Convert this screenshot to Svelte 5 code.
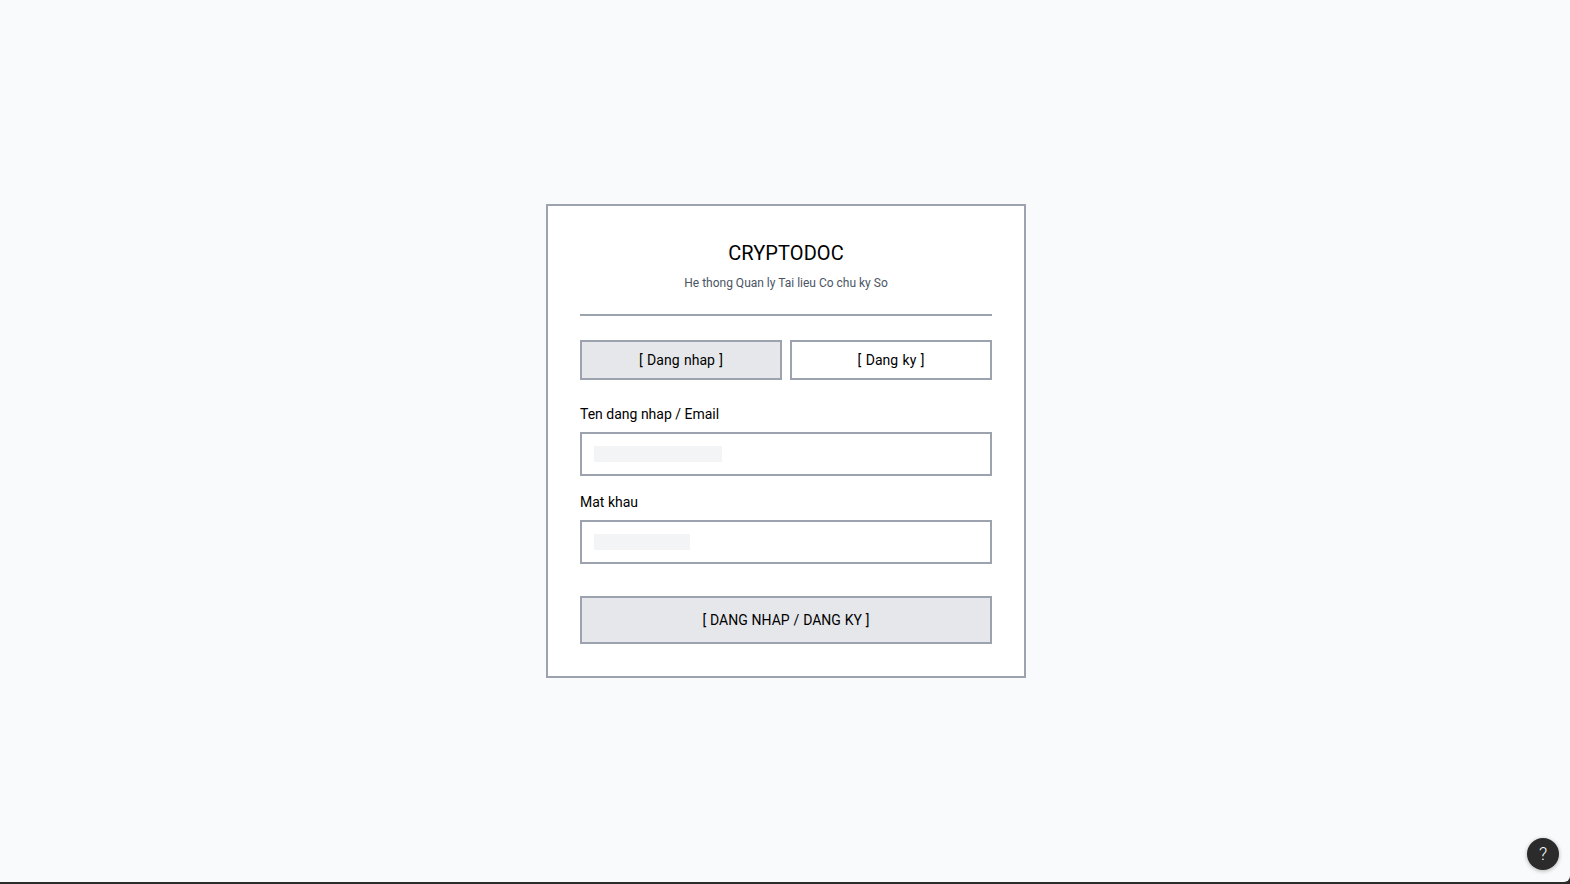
<script>
	let mode = $state("login");
</script>

<div class="page">
	<main class="center">
		<form class="card" onsubmit={(e) => e.preventDefault()}>
			<header class="head">
				<h1>CRYPTODOC</h1>
				<p>He thong Quan ly Tai lieu Co chu ky So</p>
			</header>

			<div class="tabs">
				<button type="button" class="btn" class:active={mode === "login"} onclick={() => (mode = "login")}>[ Dang nhap ]</button>
				<button type="button" class="btn" class:active={mode === "register"} onclick={() => (mode = "register")}>[ Dang ky ]</button>
			</div>

			<div class="field">
				<span class="label">Ten dang nhap / Email</span>
				<div class="input"><span class="ph user"></span></div>
			</div>

			<div class="field">
				<span class="label">Mat khau</span>
				<div class="input"><span class="ph pass"></span></div>
			</div>

			<button type="submit" class="btn active submit">[ DANG NHAP / DANG KY ]</button>
		</form>
	</main>
	<button type="button" class="help" aria-label="Help">?</button>
</div>

<style>
	:global(body) {
		margin: 0;
		background: #2b2b2b;
		font-family: Roboto, "Noto Sans", sans-serif;
		color: #111827;
	}

	.page {
		height: 884px;
		display: flex;
		flex-direction: column;
		overflow: hidden;
		padding-bottom: 2px;
		box-sizing: border-box;
	}

	.center {
		flex: 1;
		display: flex;
		align-items: center;
		justify-content: center;
		padding-left: 2px;
		background: #f9fafb;
		border-bottom-right-radius: 6px;
	}

	.card {
		width: 480px;
		box-sizing: border-box;
		padding: 32px;
		background: #fff;
		border: 2px solid #9ca3af;
	}

	.head {
		text-align: center;
		padding: 1px 0 23px;
		border-bottom: 2px solid #9ca3af;
		margin-bottom: 24px;
	}

	h1 {
		margin: 0 0 8px;
		font-size: 20px;
		line-height: 28px;
		font-weight: 400;
		letter-spacing: 0.1px;
		color: #000;
	}

	.head p {
		margin: 0;
		font-size: 12px;
		line-height: 16px;
		color: #4b5563;
	}

	.tabs {
		display: flex;
		gap: 8px;
		margin-bottom: 24px;
	}

	.tabs .btn {
		flex: 1;
		height: 40px;
		word-spacing: 1px;
	}

	.btn {
		box-sizing: border-box;
		padding: 0;
		background: #fff;
		border: 2px solid #9ca3af;
		font-family: inherit;
		font-size: 14px;
		line-height: 20px;
		color: #000;
	}

	.btn.active {
		background: #e5e7eb;
	}

	.field {
		margin-bottom: 16px;
	}

	.label {
		display: block;
		margin-bottom: 8px;
		font-size: 14px;
		line-height: 20px;
		color: #000;
	}

	.input {
		box-sizing: border-box;
		height: 44px;
		padding: 12px;
		background: #fff;
		border: 2px solid #9ca3af;
	}

	.ph {
		display: block;
		height: 16px;
		background: #f3f4f6;
	}

	.ph.user {
		width: 128px;
	}

	.ph.pass {
		width: 96px;
	}

	.submit {
		display: block;
		width: 100%;
		height: 48px;
		margin-top: 32px;
		word-spacing: 0.4px;
	}

	.help {
		position: absolute;
		left: 1527px;
		top: 838px;
		width: 32px;
		height: 32px;
		padding: 0;
		border: none;
		border-radius: 50%;
		background: #2b2b2b;
		color: #fff;
		font-family: inherit;
		font-size: 18px;
		font-weight: 300;
		line-height: 32px;
		box-shadow: 0 1px 4px rgba(0, 0, 0, 0.3);
	}
</style>
